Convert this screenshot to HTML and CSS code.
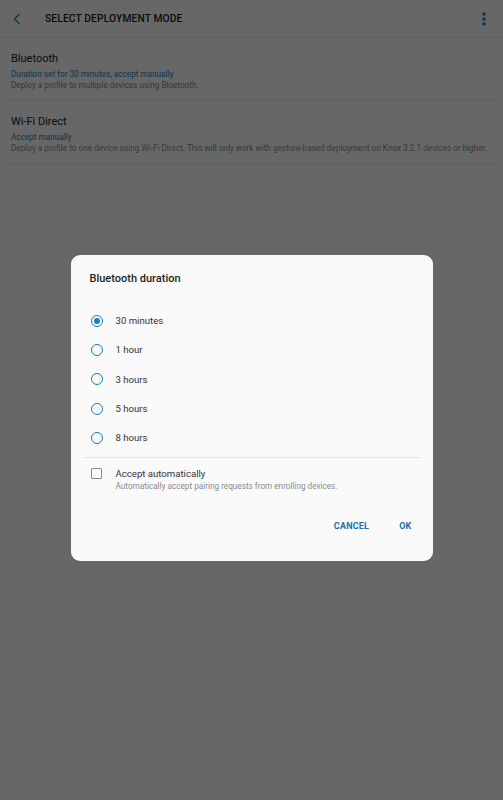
FILE: index.html
```html
<!DOCTYPE html>
<html lang="en">
<head>
  <meta charset="UTF-8">
  <title>Select deployment mode</title>
  <link rel="stylesheet" href="styles.css">
</head>
<body>

<div class="page">
  <!-- Toolbar -->
  <div class="toolbar">
    <svg class="back" width="8" height="12" viewBox="0 0 8 12">
      <path d="M6.5 1 L1.5 6 L6.5 11" fill="none" stroke="#1b7ec2" stroke-width="1.3"/>
    </svg>
    <div class="toolbar-title">SELECT DEPLOYMENT MODE</div>
    <svg class="kebab" width="4" height="14" viewBox="0 0 4 14">
      <rect x="0.5" y="0.5" width="3" height="3" fill="#1b7ec2"/>
      <rect x="0.5" y="5.5" width="3" height="3" fill="#1b7ec2"/>
      <rect x="0.5" y="10.5" width="3" height="3" fill="#1b7ec2"/>
    </svg>
  </div>

  <!-- Modes -->
  <div class="mode">
    <div class="mode-title">Bluetooth</div>
    <div class="mode-status">Duration set for 30 minutes, accept manually</div>
    <div class="mode-desc">Deploy a profile to multiple devices using Bluetooth.</div>
  </div>
  <div class="mode">
    <div class="mode-title">Wi-Fi Direct</div>
    <div class="mode-status">Accept manually</div>
    <div class="mode-desc">Deploy a profile to one device using Wi-Fi Direct. This will only work with gesture-based deployment on Knox 3.2.1 devices or higher.</div>
  </div>
</div>

<!-- Dialog -->
<div class="overlay">
  <div class="dialog">
    <div class="dialog-title">Bluetooth duration</div>

    <div class="options">
      <div class="option"><span class="radio checked"></span><span>30 minutes</span></div>
      <div class="option"><span class="radio"></span><span>1 hour</span></div>
      <div class="option"><span class="radio"></span><span>3 hours</span></div>
      <div class="option"><span class="radio"></span><span>5 hours</span></div>
      <div class="option"><span class="radio"></span><span>8 hours</span></div>
    </div>

    <div class="auto">
      <span class="checkbox"></span>
      <div>
        <div class="auto-title">Accept automatically</div>
        <div class="auto-desc">Automatically accept pairing requests from enrolling devices.</div>
      </div>
    </div>

    <div class="buttons">
      <span class="btn">CANCEL</span>
      <span class="btn">OK</span>
    </div>
  </div>
</div>

</body>
</html>
```

FILE: styles.css
```css
* {
  box-sizing: border-box;
}
body {
  font-family: Roboto, "Liberation Sans", sans-serif;
  margin: 0;
  padding: 0;
  background: #fafafa;
  color: #202020;
}
.page {
  height: 800px;
  background: #fafafa;
}
.toolbar {
  height: 38px;
  display: flex;
  align-items: center;
  padding: 0 17px 0 13px;
  border-bottom: 1px solid #e6e6e6;
}
.back {
  margin-right: 24px;
}
.toolbar-title {
  flex: 1;
  font-size: 10.3px;
  font-weight: 500;
  letter-spacing: 0.1px;
  color: #1c1c1c;
}
.kebab {
  margin-top: 1px;
}
.mode {
  margin: 0 5px;
  padding: 13px 6px 9px;
  border-bottom: 1px solid #e6e6e6;
}
.mode-title {
  font-size: 11px;
  line-height: 15px;
  color: #222;
  margin-bottom: 3px;
}
.mode-status {
  font-size: 8.2px;
  line-height: 11px;
  color: #1b7ec2;
}
.mode-desc {
  font-size: 8.2px;
  line-height: 11px;
  color: #8a8a8a;
  white-space: nowrap;
}
.overlay {
  position: fixed;
  top: 0;
  left: 0;
  right: 0;
  bottom: 0;
  background: rgba(0, 0, 0, 0.59);
  display: flex;
  justify-content: center;
  align-items: flex-start;
  padding-top: 255px;
}
.dialog {
  width: 362px;
  height: 306px;
  background: #fafafa;
  border-radius: 9px;
  padding: 17px 11px 0 12px;
}
.dialog-title {
  font-size: 11px;
  font-weight: 500;
  color: #1e1e1e;
  line-height: 14px;
  padding-left: 7px;
}
.options {
  margin-top: 20px;
  padding-left: 8px;
}
.option {
  display: flex;
  align-items: center;
  height: 29.3px;
  font-size: 9.6px;
  color: #333;
}
.radio {
  width: 12px;
  height: 12px;
  border: 1.4px solid #1b7ec2;
  border-radius: 50%;
  margin-right: 13px;
  display: flex;
  align-items: center;
  justify-content: center;
}
.radio.checked::after {
  content: "";
  width: 6px;
  height: 6px;
  border-radius: 50%;
  background: #1b7ec2;
}
.auto {
  margin-top: 5px;
  border-top: 1px solid #e6e6e6;
  padding: 9px 0 0 8px;
  display: flex;
}
.checkbox {
  width: 11px;
  height: 11px;
  border: 1.3px solid #8a8a8a;
  border-radius: 1px;
  margin: 1px 14px 0 0;
  flex-shrink: 0;
}
.auto-title {
  font-size: 9.6px;
  line-height: 13px;
  color: #333;
}
.auto-desc {
  font-size: 8.2px;
  line-height: 12px;
  color: #8a8a8a;
}
.buttons {
  display: flex;
  justify-content: flex-end;
  gap: 30px;
  margin-top: 29px;
  padding-right: 10px;
}
.btn {
  font-size: 9px;
  font-weight: 700;
  color: #1b6fae;
  letter-spacing: 0.2px;
}
```
